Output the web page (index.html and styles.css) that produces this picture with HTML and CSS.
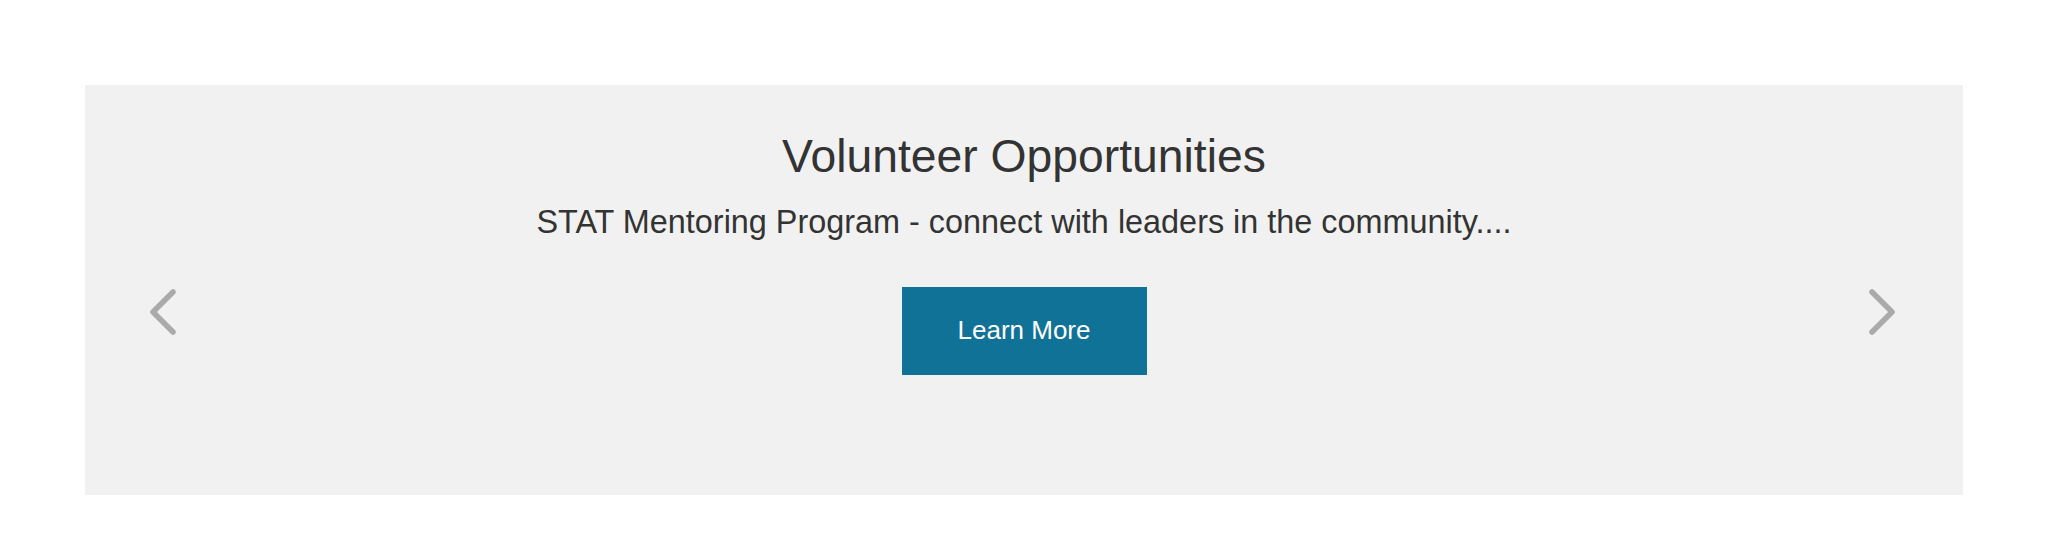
FILE: index.html
```html
<!DOCTYPE html>
<html lang="en">
<head>
<meta charset="utf-8">
<title>Volunteer Opportunities</title>
<link rel="stylesheet" href="styles.css">
</head>
<body>
<section class="carousel">
  <a class="control control-prev" href="#" aria-label="Previous">
    <svg width="32" height="52" viewBox="0 0 32 52"><polyline points="24,6 4,26 24,46" fill="none" stroke="#aaaaaa" stroke-width="5.5" stroke-linecap="round" stroke-linejoin="round"/></svg>
  </a>
  <div class="slide">
    <h2 class="slide-title">Volunteer Opportunities</h2>
    <p class="slide-text">STAT Mentoring Program - connect with leaders in the community....</p>
    <a class="btn" href="#">Learn More</a>
  </div>
  <a class="control control-next" href="#" aria-label="Next">
    <svg width="32" height="52" viewBox="0 0 32 52"><polyline points="8,6 28,26 8,46" fill="none" stroke="#aaaaaa" stroke-width="5.5" stroke-linecap="round" stroke-linejoin="round"/></svg>
  </a>
</section>
</body>
</html>
```
FILE: styles.css
```css
html, body {
  margin: 0;
  padding: 0;
  background: #ffffff;
}
body {
  font-family: "Liberation Sans", Arial, Helvetica, sans-serif;
  color: #333333;
  padding: 85px 85px 0 85px;
}
.carousel {
  position: relative;
  background: #f1f1f1;
  height: 410px;
  box-sizing: border-box;
  padding-top: 43px;
}
.slide {
  display: flex;
  flex-direction: column;
  align-items: center;
}
.slide-title {
  margin: 0;
  font-size: 46.3px;
  line-height: 56px;
  font-weight: 400;
  color: #333333;
}
.slide-text {
  margin: 18px 0 0 0;
  font-size: 32.4px;
  line-height: 40px;
  color: #333333;
}
.btn {
  margin-top: 45px;
  width: 245px;
  height: 88px;
  padding-bottom: 2px;
  box-sizing: border-box;
  display: flex;
  align-items: center;
  justify-content: center;
  background: #107297;
  color: #ffffff;
  font-size: 26px;
  text-decoration: none;
}
.control {
  position: absolute;
  top: 201px;
  display: block;
  width: 32px;
  height: 52px;
}
.control svg { display: block; }
.control-prev { left: 64px; }
.control-next { right: 67px; }
```
